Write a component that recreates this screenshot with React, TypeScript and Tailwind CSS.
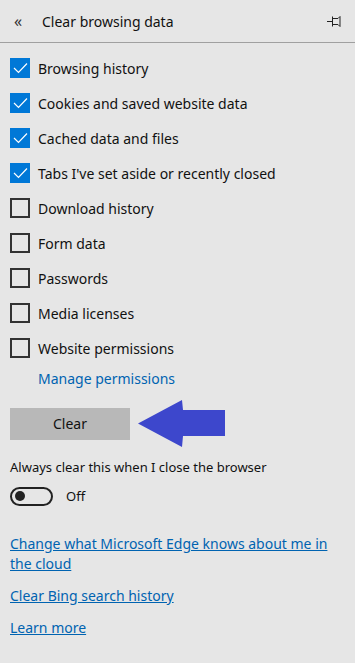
import React from "react"

const items = [
  { label: "Browsing history", checked: true },
  { label: "Cookies and saved website data", checked: true },
  { label: "Cached data and files", checked: true },
  { label: "Tabs I've set aside or recently closed", checked: true },
  { label: "Download history", checked: false },
  { label: "Form data", checked: false },
  { label: "Passwords", checked: false },
  { label: "Media licenses", checked: false },
  { label: "Website permissions", checked: false },
]

function Checkbox({ checked }: { checked: boolean }) {
  if (checked) {
    return (
      <div className="w-5 h-5 bg-[#0078d7] flex items-center justify-center shrink-0">
        <svg width="15" height="12" viewBox="0 0 15 12" fill="none">
          <path d="M1 6 L5.5 10.5 L14 1.5" stroke="white" strokeWidth="1.2" />
        </svg>
      </div>
    )
  }
  return <div className="w-5 h-5 border-2 border-[#333] shrink-0" />
}

export default function App() {
  return (
    <div
      className="w-[355px] h-[663px] bg-[#e6e6e6] text-[#000] overflow-hidden"
      style={{ fontFamily: '"Segoe UI", "Noto Sans", sans-serif' }}
    >
      {/* Header */}
      <div className="h-[43px] flex items-center border-b border-[#a0a0a0] pl-[14px] pr-[11px]">
        <span className="text-[#333] text-[16px] w-[28px] leading-none">«</span>
        <span className="text-[14px] text-[#111]">Clear browsing data</span>
        <svg className="ml-auto" width="17" height="12" viewBox="0 0 17 12" fill="none">
          <path d="M0 6.5 H5 M5.5 1.5 V11.5 M5.5 3.5 H11 L13 1.5 V11.5 L11 9.5 H5.5" stroke="#222" strokeWidth="1" />
        </svg>
      </div>

      <div className="px-[10px] pt-[15px]">
        <div className="flex flex-col gap-[15px]">
          {items.map((it) => (
            <div key={it.label} className="flex items-center gap-[8px] h-5">
              <Checkbox checked={it.checked} />
              <span className="text-[14px] text-[#111]">{it.label}</span>
            </div>
          ))}
        </div>
        <div className="pl-[28px] mt-[10px] text-[14px] text-[#0063b1]">Manage permissions</div>

        <div className="flex items-center mt-[11px] relative">
          <button className="w-[120px] h-[32px] bg-[#b8b8b8] text-[14px] text-[#111]">Clear</button>
          <svg className="ml-[8px]" width="88" height="47" viewBox="0 0 88 47">
            <path d="M0 23.5 L44 0 L45 10 L87 10 L87 36 L45 36 L44 47 Z" fill="#3d47cc" />
          </svg>
        </div>

        <div className="mt-[11px] text-[13px] text-[#111]">Always clear this when I close the browser</div>
        <div className="flex items-center mt-[9px]">
          <div className="w-[43px] h-[19px] rounded-full border-2 border-[#222] flex items-center pl-[3px]">
            <div className="w-[10px] h-[10px] rounded-full bg-[#222]" />
          </div>
          <span className="ml-[13px] text-[13px] text-[#111]">Off</span>
        </div>

        <div className="mt-[28px] flex flex-col gap-[12px] text-[14px] text-[#0063b1] leading-[20px]">
          <a className="underline">Change what Microsoft Edge knows about me in the cloud</a>
          <a className="underline">Clear Bing search history</a>
          <a className="underline">Learn more</a>
        </div>
      </div>
    </div>
  )
}
